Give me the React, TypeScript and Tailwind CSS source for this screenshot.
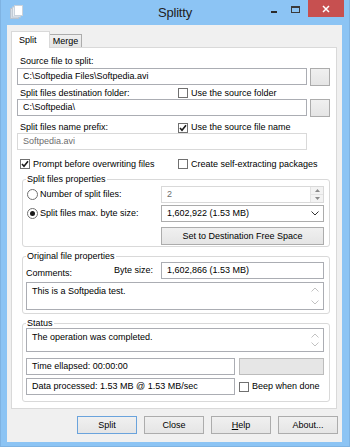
import clsx from "clsx";
import type { ReactNode } from "react";

function Check({ checked, label, className }: { checked?: boolean; label: string; className?: string }) {
  return (
    <div className={clsx("flex items-center gap-[3px]", className)}>
      <span className="w-[10px] h-[10px] border border-[#707070] bg-white flex items-center justify-center">
        {checked && (
          <svg width="8" height="8" viewBox="0 0 8 8">
            <path d="M1 4 L3 6.3 L7 1.3" stroke="#1a1a1a" strokeWidth="1.6" fill="none" />
          </svg>
        )}
      </span>
      <span>{label}</span>
    </div>
  );
}

function Radio({ checked, label }: { checked?: boolean; label: string }) {
  return (
    <div className="flex items-center gap-[2px]">
      <span className="w-[11px] h-[11px] rounded-full border border-[#707070] bg-white flex items-center justify-center">
        {checked && <span className="w-[5px] h-[5px] rounded-full bg-[#1a1a1a]" />}
      </span>
      <span>{label}</span>
    </div>
  );
}

function Field({ children, className, muted }: { children?: ReactNode; className?: string; muted?: boolean }) {
  return (
    <div
      className={clsx(
        "h-[17px] bg-white border flex items-center pl-[5px] whitespace-nowrap",
        muted ? "border-[#d9d9d9] text-[#6d6d6d]" : "border-[#abadb3]",
        className
      )}
    >
      {children}
    </div>
  );
}

function Chevron({ up, color = "#c2c2c2" }: { up?: boolean; color?: string }) {
  return (
    <svg width="8" height="5" viewBox="0 0 8 5">
      <path d={up ? "M0.5 4.5 L4 1 L7.5 4.5" : "M0.5 0.5 L4 4 L7.5 0.5"} stroke={color} fill="none" />
    </svg>
  );
}

function Memo({ text, className }: { text: string; className?: string }) {
  return (
    <div className={clsx("bg-white border border-[#abadb3] flex", className)}>
      <div className="flex-1 pl-[5px] pt-[3px]">{text}</div>
      <div className="w-[14px] flex flex-col items-center justify-between py-[4px] mr-[1px]">
        <Chevron up />
        <Chevron />
      </div>
    </div>
  );
}

function Btn({ children, active, className }: { children: ReactNode; active?: boolean; className?: string }) {
  return (
    <div
      className={clsx(
        "h-[18px] border bg-gradient-to-b from-[#f0f0f0] to-[#e5e5e5] flex items-center justify-center",
        active ? "border-[#6aa3dc]" : "border-[#acacac]",
        className
      )}
    >
      {children}
    </div>
  );
}

export default function App() {
  return (
    <div className="w-[350px] h-[447px] bg-[#8cc4f4] border border-t-0 border-[#7fb3e2] flex flex-col font-['Liberation_Sans',Arial,sans-serif] text-[9px] leading-[11px] text-black select-none">
      {/* title bar */}
      <div className="h-[25px] grid grid-cols-[1fr_auto_1fr]">
        <div className="pl-[9px] pt-[5px]">
          <svg width="13" height="14" viewBox="0 0 13 14">
            <rect x="0.5" y="3.5" width="8" height="10" fill="#d5dde6" stroke="#b8c3cf" />
            <rect x="2.5" y="2" width="8" height="10" fill="#e9eef3" stroke="#c2ccd6" />
            <rect x="4.5" y="0.5" width="8" height="10" fill="#ffffff" stroke="#c9d2db" />
          </svg>
        </div>
        <div className="text-[13px] tracking-[-0.2px] leading-[25px] text-[#222] pb-[2px]">Splitty</div>
        <div className="flex justify-end items-start pr-[5px]">
          <div className="w-[18px] h-[17px] flex justify-center pt-[11px]">
            <span className="w-[6px] h-[2px] bg-[#2b2b2b]" />
          </div>
          <div className="w-[25px] h-[17px] flex justify-center pt-[6px]">
            <span className="w-[9px] h-[7px] border border-t-2 border-[#3a3a3a]" />
          </div>
          <div className="w-[36px] h-[17px] bg-[#c75050] flex items-center justify-center">
            <svg width="8" height="8" viewBox="0 0 8 8">
              <path d="M1 1 L7 7 M7 1 L1 7" stroke="#fff" strokeWidth="1.5" />
            </svg>
          </div>
        </div>
      </div>

      {/* client area */}
      <div className="flex-1 ml-[6px] mr-[7px] mb-[4px] bg-[#f0f0f0] flex flex-col pt-[6px] pb-[8px]">
        <div className="h-[16px] flex items-end pl-[4px] relative z-10">
          <div className="w-[39px] h-[17px] -mb-px bg-white border border-b-0 border-[#d9d9d9] pl-[7px] pt-[3px]">Split</div>
          <div className="w-[32px] h-[13px] bg-gradient-to-b from-[#f0f0f0] to-[#e5e5e5] border border-l-0 border-b-0 border-[#acacac] flex items-center justify-center">
            Merge
          </div>
        </div>

        <div className="h-[362px] ml-[4px] mr-[5px] bg-white border border-[#d9d9d9] flex flex-col pl-[5px] pr-[6px] pt-[8px]">
          <div className="h-[11px] pl-[3px]">Source file to split:</div>
          <div className="mt-[1px] h-[17px] flex gap-[3px]">
            <Field className="flex-1">{"C:\\Softpedia Files\\Softpedia.avi"}</Field>
            <Btn className="w-[20px]">{""}</Btn>
          </div>

          <div className="mt-[2px] h-[12px] flex items-center">
            <div className="w-[161px] pl-[3px]">Split files destination folder:</div>
            <Check label="Use the source folder" />
          </div>
          <div className="h-[17px] flex gap-[3px]">
            <Field className="flex-1">{"C:\\Softpedia\\"}</Field>
            <Btn className="w-[20px]">{""}</Btn>
          </div>

          <div className="mt-[6px] h-[11px] flex items-center">
            <div className="w-[161px] pl-[3px]">Split files name prefix:</div>
            <Check checked label="Use the source file name" />
          </div>
          <Field muted className="w-[290px]">Softpedia.avi</Field>

          <div className="mt-[8px] h-[12px] flex items-center">
            <div className="w-[161px] pl-[3px]">
              <Check checked label="Prompt before overwriting files" />
            </div>
            <Check label="Create self-extracting packages" />
          </div>

          <fieldset className="mt-[4px] ml-[5px] border border-[#d9d9d9] rounded-[3px] pl-[3px] pr-[5px] pt-[1px] pb-[2px]">
            <legend className="px-[1px] leading-[11px]">Split files properties</legend>
            <div className="h-[17px] flex items-center">
              <div className="w-[135px] pl-[1px]">
                <Radio label="Number of split files:" />
              </div>
              <Field muted className="flex-1 pl-[5px] pr-0">
                <span className="flex-1">2</span>
                <div className="w-[13px] h-full flex flex-col bg-[#f3f3f3] border-l border-[#e3e3e3]">
                  <div className="flex-1 flex items-center justify-center border-b border-[#e3e3e3]">
                    <svg width="5" height="3" viewBox="0 0 5 3"><path d="M0 3 L2.5 0 L5 3Z" fill="#8a8a8a" /></svg>
                  </div>
                  <div className="flex-1 flex items-center justify-center">
                    <svg width="5" height="3" viewBox="0 0 5 3"><path d="M0 0 L2.5 3 L5 0Z" fill="#8a8a8a" /></svg>
                  </div>
                </div>
              </Field>
            </div>
            <div className="mt-[2px] h-[17px] flex items-center">
              <div className="w-[135px] pl-[1px]">
                <Radio checked label="Split files max. byte size:" />
              </div>
              <Field className="flex-1 border-[#acacac] pr-[4px]">
                <span className="flex-1">1,602,922 (1.53 MB)</span>
                <Chevron color="#333" />
              </Field>
            </div>
            <div className="mt-[5px] h-[17px] flex">
              <Btn className="ml-[135px] flex-1 h-[17px]">Set to Destination Free Space</Btn>
            </div>
          </fieldset>

          <fieldset className="mt-[4px] ml-[5px] border border-[#d9d9d9] rounded-[3px] pl-[3px] pr-[5px] pb-[3px]">
            <legend className="px-[1px] leading-[11px]">Original file properties</legend>
            <div className="h-[17px] flex items-end justify-between">
              <div>Comments:</div>
              <div className="flex items-center gap-[8px]">
                <span>Byte size:</span>
                <Field className="w-[163px]">1,602,866 (1.53 MB)</Field>
              </div>
            </div>
            <Memo className="mt-[3px] h-[28px]" text="This is a Softpedia test." />
          </fieldset>

          <fieldset className="mt-[4px] ml-[5px] border border-[#d9d9d9] rounded-[3px] pl-[3px] pr-[5px] pb-[6px]">
            <legend className="px-[1px] leading-[10px]">Status</legend>
            <Memo className="h-[24px]" text="The operation was completed." />
            <div className="mt-[6px] h-[17px] flex gap-[4px]">
              <Field className="w-[209px]">Time ellapsed: 00:00:00</Field>
              <div className="flex-1 bg-[#e6e6e6] border border-[#bcbcbc]" />
            </div>
            <div className="mt-[3px] h-[17px] flex items-center gap-[4px]">
              <Field className="w-[209px]">Data processed: 1.53 MB @ 1.53 MB/sec</Field>
              <Check label="Beep when done" />
            </div>
          </fieldset>
        </div>

        <div className="mt-[7px] flex justify-end gap-[7px] pr-[4px]">
          <Btn active className="w-[60px]">Split</Btn>
          <Btn className="w-[60px]">Close</Btn>
          <Btn className="w-[60px]">
            <span>
              <span className="underline">H</span>elp
            </span>
          </Btn>
          <Btn className="w-[60px]">About...</Btn>
        </div>
      </div>
    </div>
  );
}
